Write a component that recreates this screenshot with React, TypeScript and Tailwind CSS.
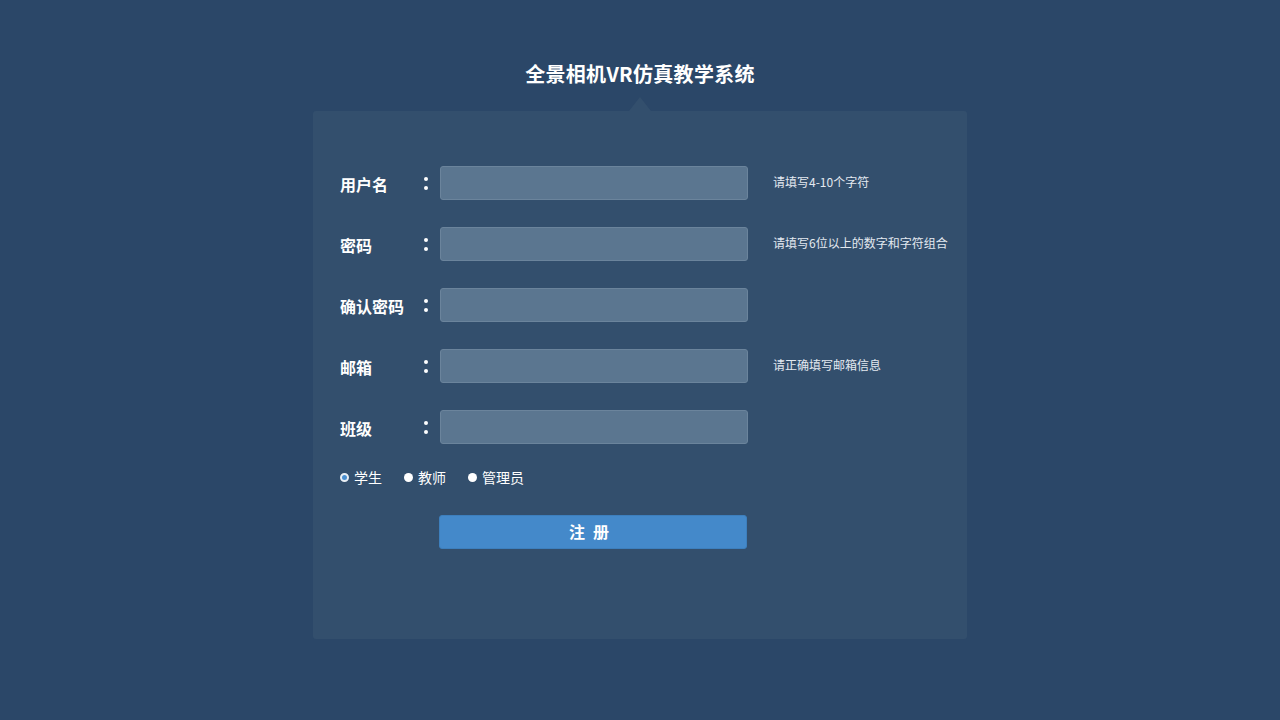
import { useState } from 'react';

const fields = [
    { label: '用户名', hint: '请填写4-10个字符', type: 'text' },
    { label: '密码', hint: '请填写6位以上的数字和字符组合', type: 'password' },
    { label: '确认密码', hint: '', type: 'password' },
    { label: '邮箱', hint: '请正确填写邮箱信息', type: 'email' },
    { label: '班级', hint: '', type: 'text' },
];

const roles = ['学生', '教师', '管理员'];

function Colon() {
    return (
        <div className="flex w-[12px] flex-col items-center gap-[5px]">
            <span className="h-[4px] w-[4px] rounded-full bg-white" />
            <span className="h-[4px] w-[4px] rounded-full bg-white" />
        </div>
    );
}

export default function App() {
    const [role, setRole] = useState('学生');

    return (
        <div
            className="flex min-h-[720px] flex-col items-center bg-[#2b4768] pt-[60px] text-white"
            style={{ fontFamily: '"Noto Sans CJK SC", "Noto Sans", sans-serif' }}
        >
            <h1 className="h-[28px] text-[20px] font-bold leading-[28px] tracking-[0.3px]">全景相机VR仿真教学系统</h1>
            <div className="mt-[9px] h-0 w-0 border-x-[11px] border-b-[14px] border-x-transparent border-b-[#334f6d]" />
            <div className="h-[528px] w-[654px] rounded-[3px] bg-[#334f6d] pl-[27px] pt-[55px]">
                <div className="flex flex-col gap-[27px]">
                    {fields.map((f) => (
                        <div key={f.label} className="flex h-[34px] items-center">
                            <label className="mt-[2px] w-[80px] text-[16px] font-bold">{f.label}</label>
                            <Colon />
                            <input
                                type={f.type}
                                className="ml-[8px] h-[34px] w-[308px] rounded-[3px] border border-[#6b849c] bg-[#5b7690] px-2 text-[14px] text-white outline-none"
                            />
                            {f.hint && (
                                <span className="ml-[25px] -mt-[2px] text-[12px] text-[#e3e9f0]">{f.hint}</span>
                            )}
                        </div>
                    ))}
                </div>
                <div className="mt-[23px] flex h-[20px] items-center gap-[22px]">
                    {roles.map((r) => (
                        <button
                            key={r}
                            type="button"
                            onClick={() => setRole(r)}
                            className="flex items-center gap-[5px] text-[14px] text-white"
                        >
                            {role === r ? (
                                <span className="h-[9px] w-[9px] rounded-full border-2 border-[#e8eef4] bg-[#4a8fd0]" />
                            ) : (
                                <span className="h-[9px] w-[9px] rounded-full bg-white" />
                            )}
                            {r}
                        </button>
                    ))}
                </div>
                <button
                    type="button"
                    className="ml-[99px] mt-[28px] h-[34px] w-[308px] rounded-[3px] border border-[#3d7fbd] bg-[#4489ca] pb-[3px] text-[16px] font-bold leading-none tracking-[8px] text-white"
                >
                    注册
                </button>
            </div>
        </div>
    );
}
